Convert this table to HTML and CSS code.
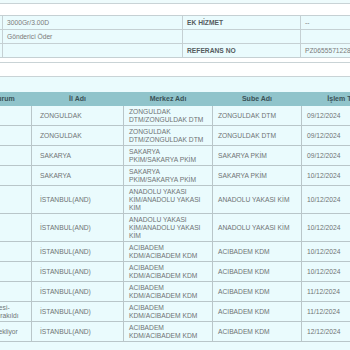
FILE: index.html
```html
<!DOCTYPE html>
<html lang="tr">
<head>
<meta charset="utf-8">
<title>Gönderi Detay</title>
<link rel="stylesheet" href="styles.css">
</head>
<body>
<div class="page">
  <div class="prev"></div>
  <div class="spacer"></div>
  <div class="clip">
    <table class="info">
      <colgroup><col class="c-hid"><col class="c-val1"><col class="c-lab"><col class="c-val2"></colgroup>
      <tr><td></td><td>3000Gr/3.00D</td><td class="lab">EK HİZMET</td><td>--</td></tr>
      <tr><td></td><td>Gönderici Öder</td><td class="lab"></td><td class="nob"></td></tr>
      <tr><td></td><td></td><td class="lab">REFERANS NO</td><td>PZ0655571228</td></tr>
    </table>
  </div>
  <div class="gap"></div>
  <div class="section">
    <div class="section-head"></div>
    <div class="section-body">
      <div class="clip">
        <table class="moves">
          <colgroup><col class="m-durum"><col class="m-il"><col class="m-merkez"><col class="m-sube"><col class="m-tarih"></colgroup>
          <thead>
            <tr><th>Durum</th><th>İl Adı</th><th>Merkez Adı</th><th>Sube Adı</th><th>İşlem Tarihi</th></tr>
          </thead>
          <tbody>
            <tr><td></td><td class="il">ZONGULDAK</td><td>ZONGULDAK DTM/ZONGULDAK DTM</td><td>ZONGULDAK DTM</td><td>09/12/2024</td></tr>
            <tr><td></td><td class="il">ZONGULDAK</td><td>ZONGULDAK DTM/ZONGULDAK DTM</td><td>ZONGULDAK DTM</td><td>09/12/2024</td></tr>
            <tr><td></td><td class="il">SAKARYA</td><td>SAKARYA PKİM/SAKARYA PKİM</td><td>SAKARYA PKİM</td><td>09/12/2024</td></tr>
            <tr><td></td><td class="il">SAKARYA</td><td>SAKARYA PKİM/SAKARYA PKİM</td><td>SAKARYA PKİM</td><td>10/12/2024</td></tr>
            <tr><td></td><td class="il">İSTANBUL(AND)</td><td>ANADOLU YAKASI KİM/ANADOLU YAKASI KİM</td><td>ANADOLU YAKASI KİM</td><td>10/12/2024</td></tr>
            <tr><td></td><td class="il">İSTANBUL(AND)</td><td>ANADOLU YAKASI KİM/ANADOLU YAKASI KİM</td><td>ANADOLU YAKASI KİM</td><td>10/12/2024</td></tr>
            <tr><td></td><td class="il">İSTANBUL(AND)</td><td>ACIBADEM KDM/ACIBADEM KDM</td><td>ACIBADEM KDM</td><td>10/12/2024</td></tr>
            <tr><td></td><td class="il">İSTANBUL(AND)</td><td>ACIBADEM KDM/ACIBADEM KDM</td><td>ACIBADEM KDM</td><td>10/12/2024</td></tr>
            <tr><td></td><td class="il">İSTANBUL(AND)</td><td>ACIBADEM KDM/ACIBADEM KDM</td><td>ACIBADEM KDM</td><td>11/12/2024</td></tr>
            <tr><td class="st">Desi-<br>Bırakıldı</td><td class="il">İSTANBUL(AND)</td><td>ACIBADEM KDM/ACIBADEM KDM</td><td>ACIBADEM KDM</td><td>11/12/2024</td></tr>
            <tr><td class="st">Bekliyor</td><td class="il">İSTANBUL(AND)</td><td>ACIBADEM KDM/ACIBADEM KDM</td><td>ACIBADEM KDM</td><td>12/12/2024</td></tr>
          </tbody>
        </table>
      </div>
    </div>
  </div>
</div>
</body>
</html>
```

FILE: styles.css
```css
html, body {
  margin: 0;
  padding: 0;
  background: #ffffff;
}
body {
  font-family: "Liberation Sans", Arial, sans-serif;
  color: #707070;
}
.page {
  width: 350px;
  height: 350px;
  overflow: hidden;
}
.prev {
  height: 3px;
  background: #eefbfc;
  border-bottom: 1px solid #c9d3d6;
}
.spacer {
  height: 11px;
}
.clip {
  overflow: hidden;
  width: 350px;
}
table {
  border-collapse: collapse;
  table-layout: fixed;
}
.info {
  margin-left: -40px;
  width: 440px;
  border-top: 1px solid #c5d0d3;
}
.c-hid { width: 42px; }
.c-val1 { width: 180px; }
.c-lab { width: 118px; }
.c-val2 { width: 100px; }
.info td {
  background: #eafbfd;
  border: 1px solid #c5d0d3;
  font-size: 6.7px;
  line-height: 8px;
  height: 8px;
  padding: 3px 4px 2px 4px;
  white-space: nowrap;
  overflow: hidden;
  color: #7a7a7a;
}
.info td.lab {
  font-weight: bold;
  color: #555c5e;
}
.info td.nob {
  border-left-color: #eafbfd;
}
.gap {
  height: 4px;
}
.section {
  border-top: 1px solid #c9d3d6;
}
.section-head {
  height: 13px;
  background: #ffffff;
  border-bottom: 1px solid #c9d3d6;
}
.section-body {
  background: #eafbfd;
  padding-top: 15px;
  height: 300px;
}
.moves {
  margin-left: -25px;
  width: 416px;
}
.m-durum { width: 56px; }
.m-il { width: 92px; }
.m-merkez { width: 89px; }
.m-sube { width: 89px; }
.m-tarih { width: 90px; }
.moves th {
  background: #90c4cb;
  color: #3a5257;
  font-size: 7px;
  line-height: 8px;
  font-weight: bold;
  padding: 2px 4px 2px 4px;
  border: 1px solid #90c4cb;
  text-align: center;
  white-space: nowrap;
  overflow: hidden;
}
.moves td {
  background: #eafbfd;
  border: 1px solid #b9c6c9;
  font-size: 6.7px;
  line-height: 8px;
  padding: 2px 5px 1px 5px;
  vertical-align: middle;
  text-align: left;
  color: #6f7374;
}
.moves td.il {
  padding-left: 8px;
}
.moves td.st {
  padding-left: 18px;
  padding-right: 2px;
  white-space: nowrap;
  overflow: hidden;
}
```
